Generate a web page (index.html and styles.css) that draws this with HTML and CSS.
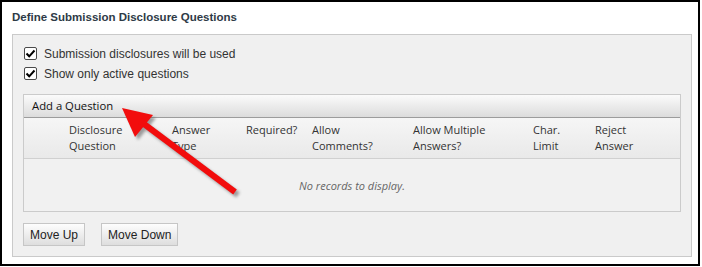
FILE: index.html
```html
<!DOCTYPE html>
<html>
<head>
<meta charset="utf-8">
<link rel="stylesheet" href="styles.css">
</head>
<body>
<div class="frame">
  <div class="title">Define Submission Disclosure Questions</div>
  <div class="panel">
    <div class="checks">
      <label class="check"><span class="box"><svg width="11" height="11" viewBox="0 0 11 11"><path d="M1.5 5.5 L4.2 8.3 L9.5 2.5" fill="none" stroke="#000" stroke-width="2"/></svg></span>Submission disclosures will be used</label>
      <label class="check"><span class="box"><svg width="11" height="11" viewBox="0 0 11 11"><path d="M1.5 5.5 L4.2 8.3 L9.5 2.5" fill="none" stroke="#000" stroke-width="2"/></svg></span>Show only active questions</label>
    </div>
    <div class="grid">
      <div class="toolbar">Add a Question</div>
      <div class="head">
        <div class="hc"></div>
        <div class="hc">Disclosure<br>Question</div>
        <div class="hc">Answer<br>Type</div>
        <div class="hc">Required?</div>
        <div class="hc">Allow<br>Comments?</div>
        <div class="hc">Allow Multiple<br>Answers?</div>
        <div class="hc">Char.<br>Limit</div>
        <div class="hc">Reject<br>Answer</div>
      </div>
      <div class="body">No records to display.</div>
    </div>
    <div class="buttons">
      <button class="btn">Move Up</button>
      <button class="btn">Move Down</button>
    </div>
  </div>
</div>
<svg class="arrow" width="702" height="267" viewBox="0 0 702 267">
  <defs>
    <filter id="sh" x="-20%" y="-20%" width="140%" height="140%">
      <feGaussianBlur stdDeviation="1.5"/>
    </filter>
  </defs>
  <g transform="translate(3,3)" fill="#555" opacity="0.55" filter="url(#sh)">
    <path d="M122 108 L153 115 L135 137 Z"/>
    <line x1="140" y1="121" x2="235" y2="192" stroke="#555" stroke-width="6"/>
  </g>
  <path d="M122 108 L153 115 L135 137 Z" fill="#f20d0d"/>
  <line x1="140" y1="121" x2="235" y2="192" stroke="#f20d0d" stroke-width="6"/>
</svg>
</body>
</html>
```
FILE: styles.css
```css
html, body {
  margin: 0;
  padding: 0;
  background: #fff;
}
body {
  width: 702px;
  height: 267px;
  position: relative;
  overflow: hidden;
  font-family: "Liberation Sans", Arial, sans-serif;
}
.frame {
  border: 2px solid #000;
  padding: 0 6px 0 10px;
  box-sizing: border-box;
  width: 700px;
  height: 266px;
}
.title {
  height: 32px;
  box-sizing: border-box;
  padding-top: 8px;
  font-size: 11.5px;
  font-weight: bold;
  color: #2e3a46;
  line-height: 14px;
}
.panel {
  border: 1px solid #cacaca;
  background: #f0f0f0;
  height: 223px;
  box-sizing: border-box;
  padding: 11px 10px 0 10px;
}
.checks {
  display: flex;
  flex-direction: column;
  gap: 5px;
  margin-bottom: 13px;
}
.check {
  display: flex;
  align-items: center;
  height: 15px;
  font-size: 12px;
  color: #333;
}
.box {
  width: 13px;
  height: 13px;
  box-sizing: border-box;
  border: 1px solid #4a4a4a;
  border-radius: 2px;
  background: #fff;
  margin: 0 7px 0 1px;
  display: flex;
  align-items: center;
  justify-content: center;
}
.box svg { display: block; }
.grid {
  border: 1px solid #cbcbcb;
  background: #f1f1f1;
  font-family: "Open Sans", "Noto Sans", sans-serif;
  font-size: 11px;
  color: #333;
}
.toolbar {
  height: 23px;
  box-sizing: border-box;
  padding: 3px 0 0 8px;
  line-height: 16px;
  font-size: 11.3px;
  background: linear-gradient(#fbfbfb, #dcdcdc);
  border-bottom: 1px solid #9c9c9c;
  color: #111;
}
.head {
  display: grid;
  grid-template-columns: 38px 103px 74px 66px 101px 120px 62px 1fr;
  height: 41px;
  box-sizing: border-box;
  background: linear-gradient(#f6f6f6, #e9e9e9);
  border-bottom: 1px solid #d0d0d0;
}
.hc {
  padding: 4px 0 0 7px;
  line-height: 16px;
}
.body {
  height: 52px;
  display: flex;
  align-items: center;
  justify-content: center;
  font-style: italic;
  color: #666;
}
.buttons {
  display: flex;
  gap: 16px;
  margin-top: 11px;
}
.btn {
  height: 23px;
  padding: 0 6px;
  border: 1px solid #c6c6c6;
  background: linear-gradient(#fdfdfd, #dedede);
  font-family: "Liberation Sans", Arial, sans-serif;
  font-size: 12px;
  color: #222;
  border-radius: 0;
  margin: 0;
}
.arrow {
  position: absolute;
  left: 0;
  top: 0;
}
```
